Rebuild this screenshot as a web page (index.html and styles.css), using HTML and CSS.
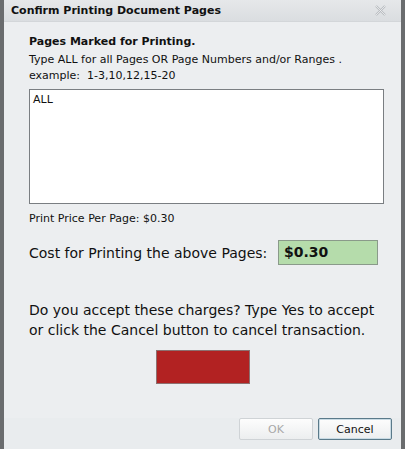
FILE: index.html
```html
<!DOCTYPE html>
<html lang="en">

<head>
  <meta charset="UTF-8" />
  <title>Confirm Printing Document Pages</title>
  <link rel="stylesheet" href="styles.css">
</head>

<body>
  <div class="dialog">
    <div class="titlebar">
      <span class="title">Confirm Printing Document Pages</span>
      <span class="close">
        <svg width="11" height="11" viewBox="0 0 11 11">
          <path d="M1 1 L10 10 M10 1 L1 10" stroke="#b8bcc0" stroke-width="2.2" fill="none" />
          <path d="M1 1 L10 10 M10 1 L1 10" stroke="#f0f1f2" stroke-width="0.8" fill="none" />
        </svg>
      </span>
    </div>
    <div class="content">
      <h3 class="heading">Pages Marked for Printing.</h3>
      <p class="hint">Type ALL for all Pages OR Page Numbers and/or Ranges .<br />example:&nbsp; 1-3,10,12,15-20</p>
      <textarea class="pages">ALL</textarea>
      <p class="price">Print Price Per Page: $0.30</p>
      <div class="cost">
        <label for="cost">Cost for Printing the above Pages:</label>
        <div class="costbox" id="cost">$0.30</div>
      </div>
      <p class="accept">Do you accept these charges? Type Yes to accept or click the Cancel button to cancel transaction.</p>
      <div class="answer"></div>
    </div>
    <div class="buttons">
      <button type="button" class="ok" disabled>OK</button>
      <button type="button" class="cancel">Cancel</button>
    </div>
  </div>
</body>

</html>
```

FILE: styles.css
```css
body {
  margin: 0;
  background-color: #6a6c6e;
  font-family: "DejaVu Sans", Verdana, sans-serif;
  height: 449px;
  overflow: hidden;
}

.dialog {
  margin-left: 4px;
  width: 397px;
  height: 460px;
  background-color: #e9ecee;
}

.titlebar {
  height: 21px;
  background: linear-gradient(#e6e8ea, #dadde0);
  display: flex;
  align-items: center;
  justify-content: space-between;
  padding: 0 15px 0 7px;
  border-bottom: 1px solid #d3d6d9;
}

.title {
  font-weight: bold;
  font-size: 11px;
  color: #111;
}

.close svg {
  display: block;
}

.content {
  padding: 13px 18px 0 25px;
  background-color: #eceef0;
  height: 383px;
  color: #111;
}

.heading {
  margin: 0;
  font-size: 11px;
  font-weight: bold;
}

.hint {
  margin: 4px 0 0 0;
  font-size: 11px;
  line-height: 16px;
}

.pages {
  display: block;
  box-sizing: border-box;
  margin-top: 5px;
  width: 355px;
  height: 115px;
  border: 1px solid #7a7e82;
  padding: 3px 3px;
  resize: none;
  font-family: "DejaVu Sans", Verdana, sans-serif;
  font-size: 11px;
  color: #111;
  background-color: #fff;
}

.price {
  margin: 8px 0 0 0;
  font-size: 11px;
}

.cost {
  display: flex;
  align-items: center;
  margin-top: 15px;
}

.cost label {
  font-size: 14px;
  width: 249px;
  white-space: nowrap;
}

.costbox {
  box-sizing: border-box;
  width: 100px;
  height: 25px;
  background-color: #b5dcab;
  border: 1px solid #8a9a8a;
  font-weight: bold;
  font-size: 14px;
  padding: 3px 5px;
}

.accept {
  margin: 35px 0 0 0;
  font-size: 14px;
  line-height: 20px;
}

.answer {
  width: 94px;
  height: 34px;
  margin: 10px 0 0 127px;
  box-sizing: border-box;
  background-color: #b22222;
  border: 1px solid #8c7070;
}

.buttons {
  display: flex;
  justify-content: flex-end;
  gap: 5px;
  padding-right: 9px;
}

button {
  box-sizing: border-box;
  width: 74px;
  height: 22px;
  font-family: "DejaVu Sans", Verdana, sans-serif;
  font-size: 11px;
  border-radius: 2px;
  background: linear-gradient(#fdfdfd, #eceeef);
}

.ok {
  border: 1px solid #cfd3d6;
  color: #a8a8a8;
}

.cancel {
  border: 1px solid #5a7a8a;
  color: #111;
  box-shadow: inset 0 0 0 1px #c9dbe4;
}
```
